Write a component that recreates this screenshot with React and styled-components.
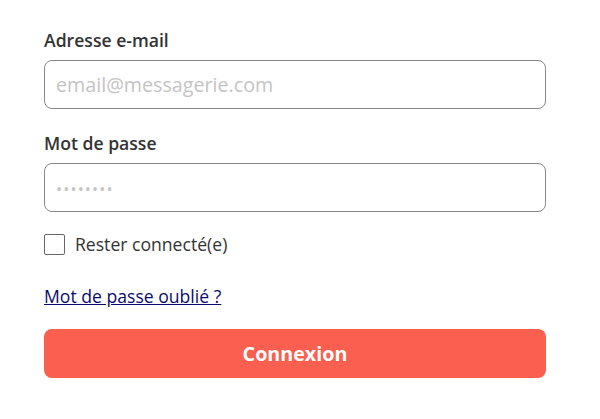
import styled, { createGlobalStyle } from 'styled-components';

const GlobalStyle = createGlobalStyle`
  body {
    margin: 0;
    background: #fff;
    font-family: "Open Sans", "Noto Sans", sans-serif;
  }
`;

export default function App() {
  return (
    <>
      <GlobalStyle />
      <Form onSubmit={e => e.preventDefault()}>
        <Field>
          <Label htmlFor="email">Adresse e-mail</Label>
          <Input id="email" type="email" placeholder="email@messagerie.com" />
        </Field>
        <Field>
          <Label htmlFor="password">Mot de passe</Label>
          <Input id="password" type="password" placeholder="••••••••" small />
        </Field>
        <CheckRow>
          <Checkbox type="checkbox" />
          Rester connecté(e)
        </CheckRow>
        <Link href="#">Mot de passe oublié ?</Link>
        <Button type="submit">Connexion</Button>
      </Form>
    </>
  );
}

const Form = styled.form`
  display: flex;
  flex-direction: column;
  width: 502px;
  padding: 28px 44px;
`;

const Field = styled.div`
  display: flex;
  flex-direction: column;
  gap: 8px;
  margin-bottom: 22px;
`;

const Label = styled.label`
  font-size: 17.6px;
  font-weight: 600;
  color: #333;
  line-height: 24px;
`;

const Input = styled.input`
  box-sizing: border-box;
  height: 49px;
  border: 1px solid #888;
  border-radius: 8px;
  padding: 0 11px;
  font-family: inherit;
  font-size: 19.7px;
  color: #333;
  outline: none;

  &::placeholder {
    color: #c4c4c4;
    font-size: ${props => props.small ? '16px' : '19.7px'};
    letter-spacing: ${props => props.small ? '1.2px' : '0'};
  }
`;

const CheckRow = styled.label`
  display: flex;
  align-items: center;
  gap: 10px;
  margin-top: -2px;
  font-size: 17.6px;
  color: #333;
  line-height: 24px;
`;

const Checkbox = styled.input`
  appearance: none;
  margin: 0;
  width: 21px;
  height: 21px;
  border: 1px solid #666;
  border-radius: 2px;
  background: #fff;
`;

const Link = styled.a`
  align-self: flex-start;
  margin-top: 28px;
  font-size: 17.6px;
  line-height: 24px;
  color: #0b0b6b;
  text-decoration: underline;
`;

const Button = styled.button`
  margin-top: 21px;
  height: 49px;
  border: none;
  border-radius: 8px;
  background: #fa5f4f;
  color: #fff;
  font-family: inherit;
  font-size: 19.7px;
  font-weight: 700;
  cursor: pointer;
`;
